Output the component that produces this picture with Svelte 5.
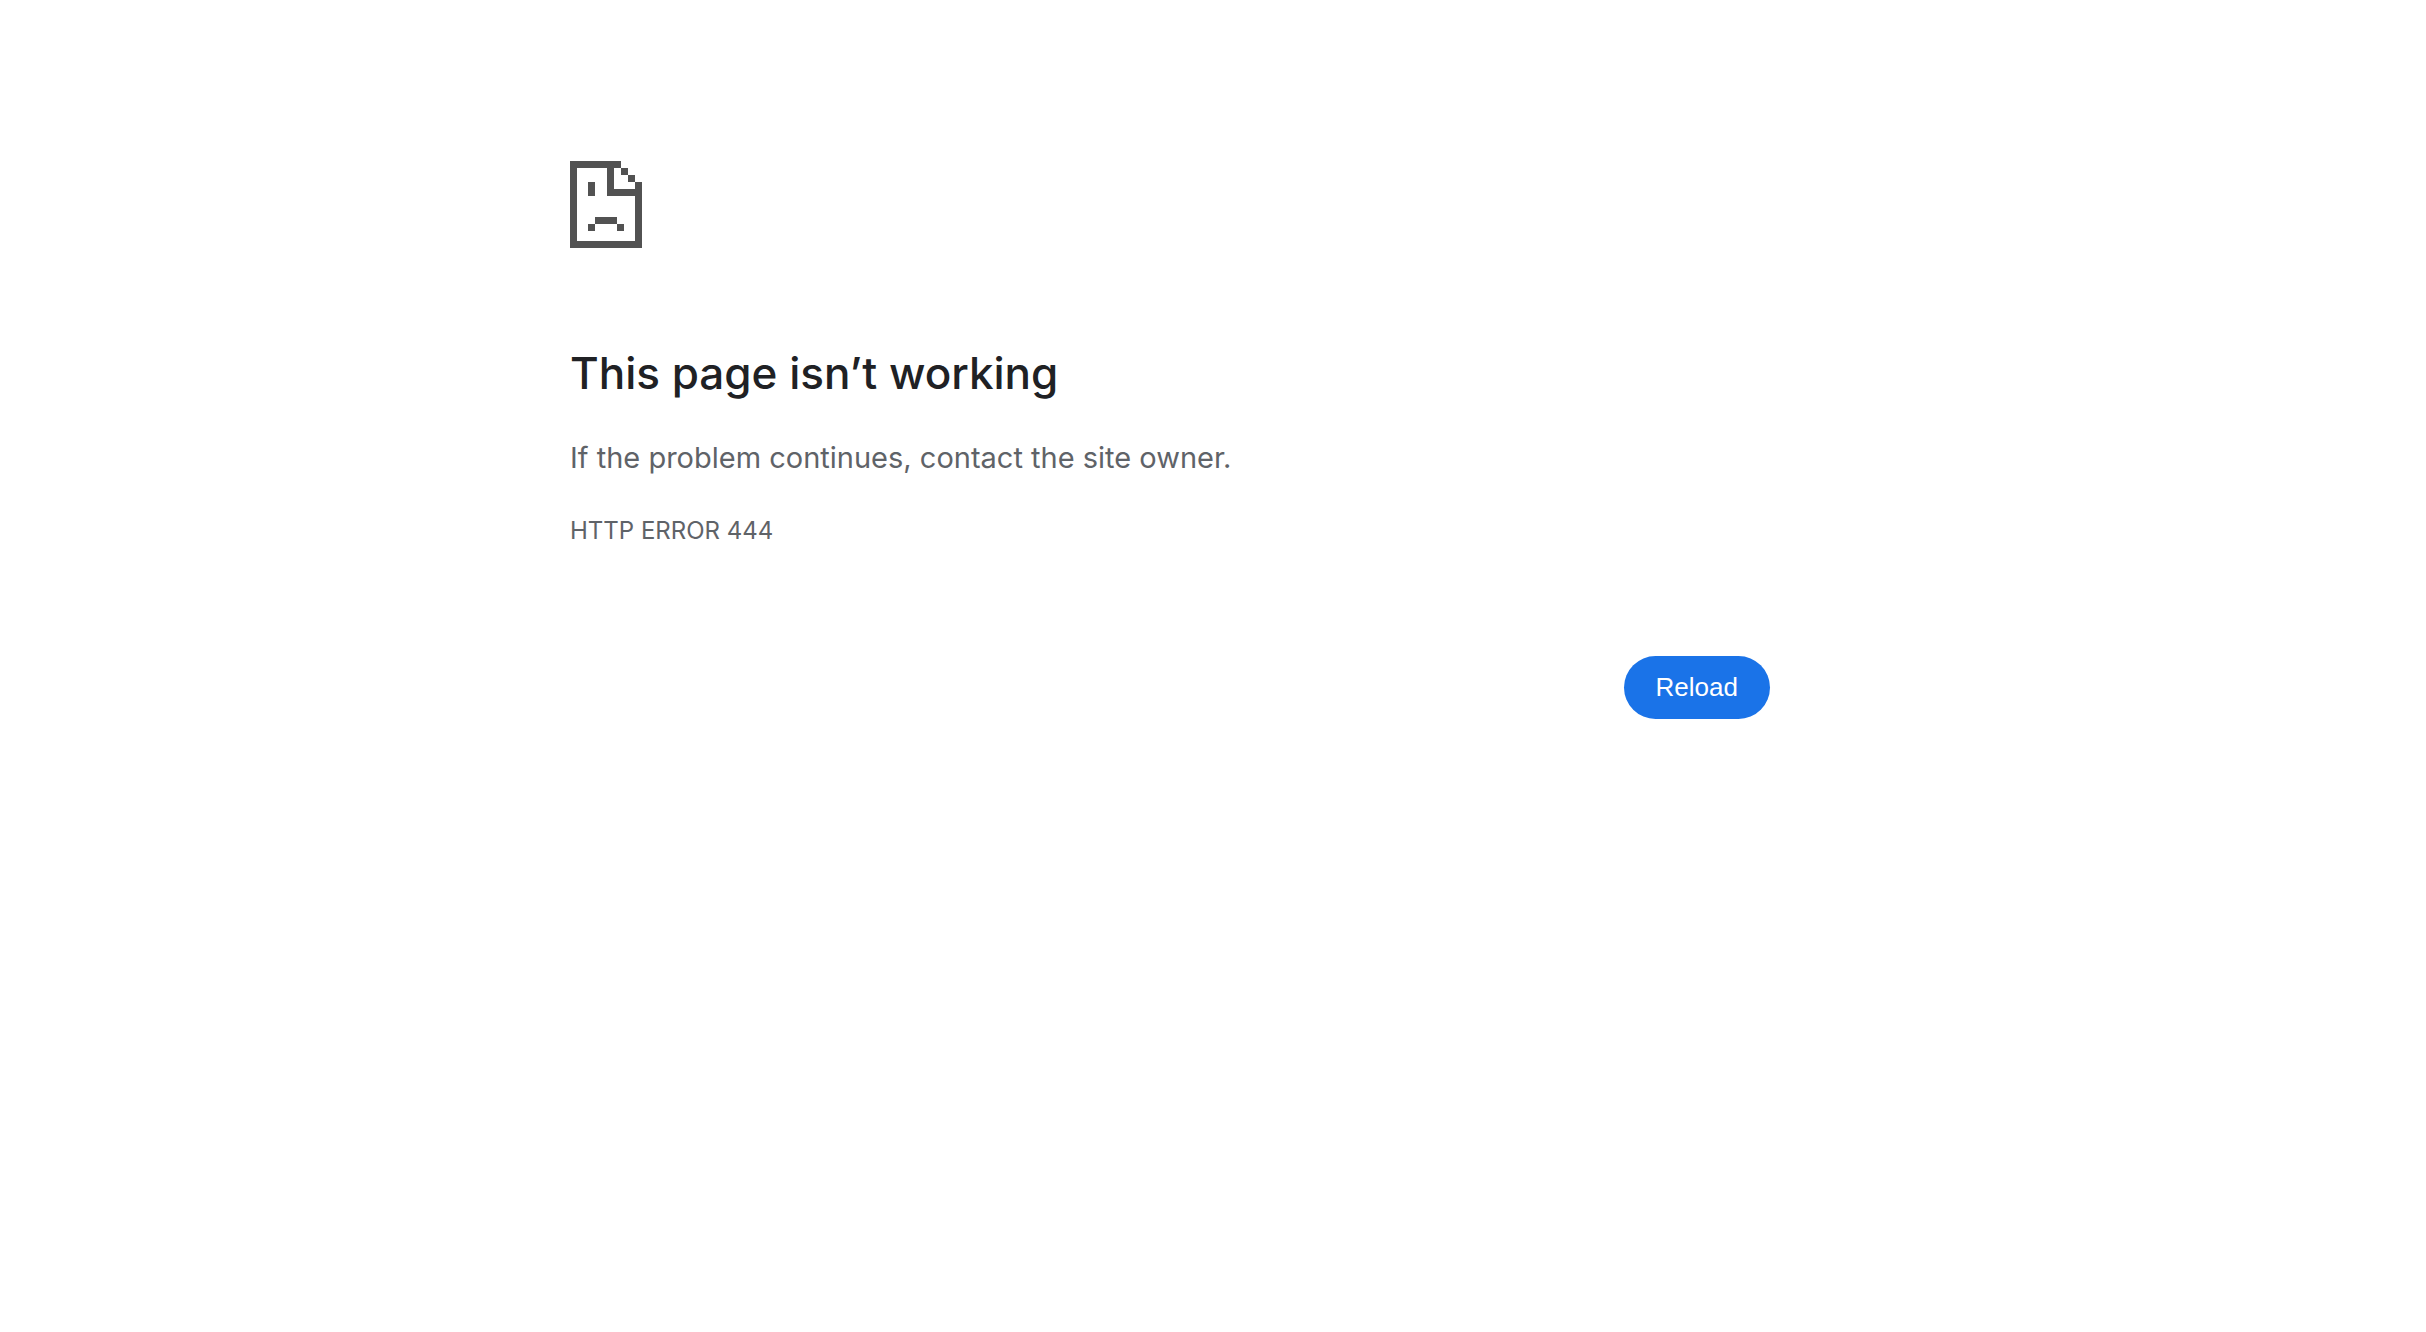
<script>
    export let title = 'This page isn’t working';
    export let summary = 'If the problem continues, contact the site owner.';
    export let errorCode = 'HTTP ERROR 444';

    function reload() {
        window.location.reload();
    }
</script>

<svelte:head>
    <title>{title}</title>
</svelte:head>

<main class="page">
    <div class="error">
        <!-- Sad page icon -->
        <svg class="icon" viewBox="0 0 216 261" shape-rendering="crispEdges" aria-hidden="true">
            <path d="M0 0H153V21H132V84H195V63H216V261H0ZM21 21V240H195V105H111V21Z" fill-rule="evenodd" />
            <path d="M153 21H174V42H153ZM174 42H195V63H174Z" />
            <path d="M54 63H75V105H54Z" />
            <path d="M75 168H141V189H75ZM54 189H75V210H54ZM141 189H162V210H141Z" />
        </svg>

        <h1>{title}</h1>
        <p class="summary">{summary}</p>
        <p class="code">{errorCode}</p>

        <div class="actions">
            <button type="button" on:click={reload}>Reload</button>
        </div>
    </div>
</main>

<style>
    :global(body) {
        background: #fff;
    }

    .page {
        padding: 161px 86px 40px 0;
        color: #5f6368;
        font-family: Inter, "Liberation Sans", sans-serif;
    }

    .error {
        max-width: 1200px;
        margin: 0 auto;
    }

    .icon {
        display: block;
        width: 72px;
        height: 87px;
        fill: #525252;
    }

    h1 {
        margin: 95px 0 31px;
        color: #202124;
        font-size: 44px;
        font-weight: 500;
        line-height: 60px;
    }

    p {
        margin: 0;
    }

    .summary {
        font-size: 29px;
        line-height: 48px;
    }

    .code {
        margin-top: 31px;
        font-size: 24px;
        line-height: 36px;
    }

    .actions {
        display: flex;
        justify-content: flex-end;
        margin-top: 107px;
    }

    button {
        padding: 16px 32px;
        border: 0;
        border-radius: 32px;
        background: #1a73e8;
        color: #fff;
        font-family: "Liberation Sans", Arial, sans-serif;
        font-size: 26px;
        line-height: 31px;
        cursor: pointer;
    }

    button:hover {
        background: #1b66c9;
    }
</style>
